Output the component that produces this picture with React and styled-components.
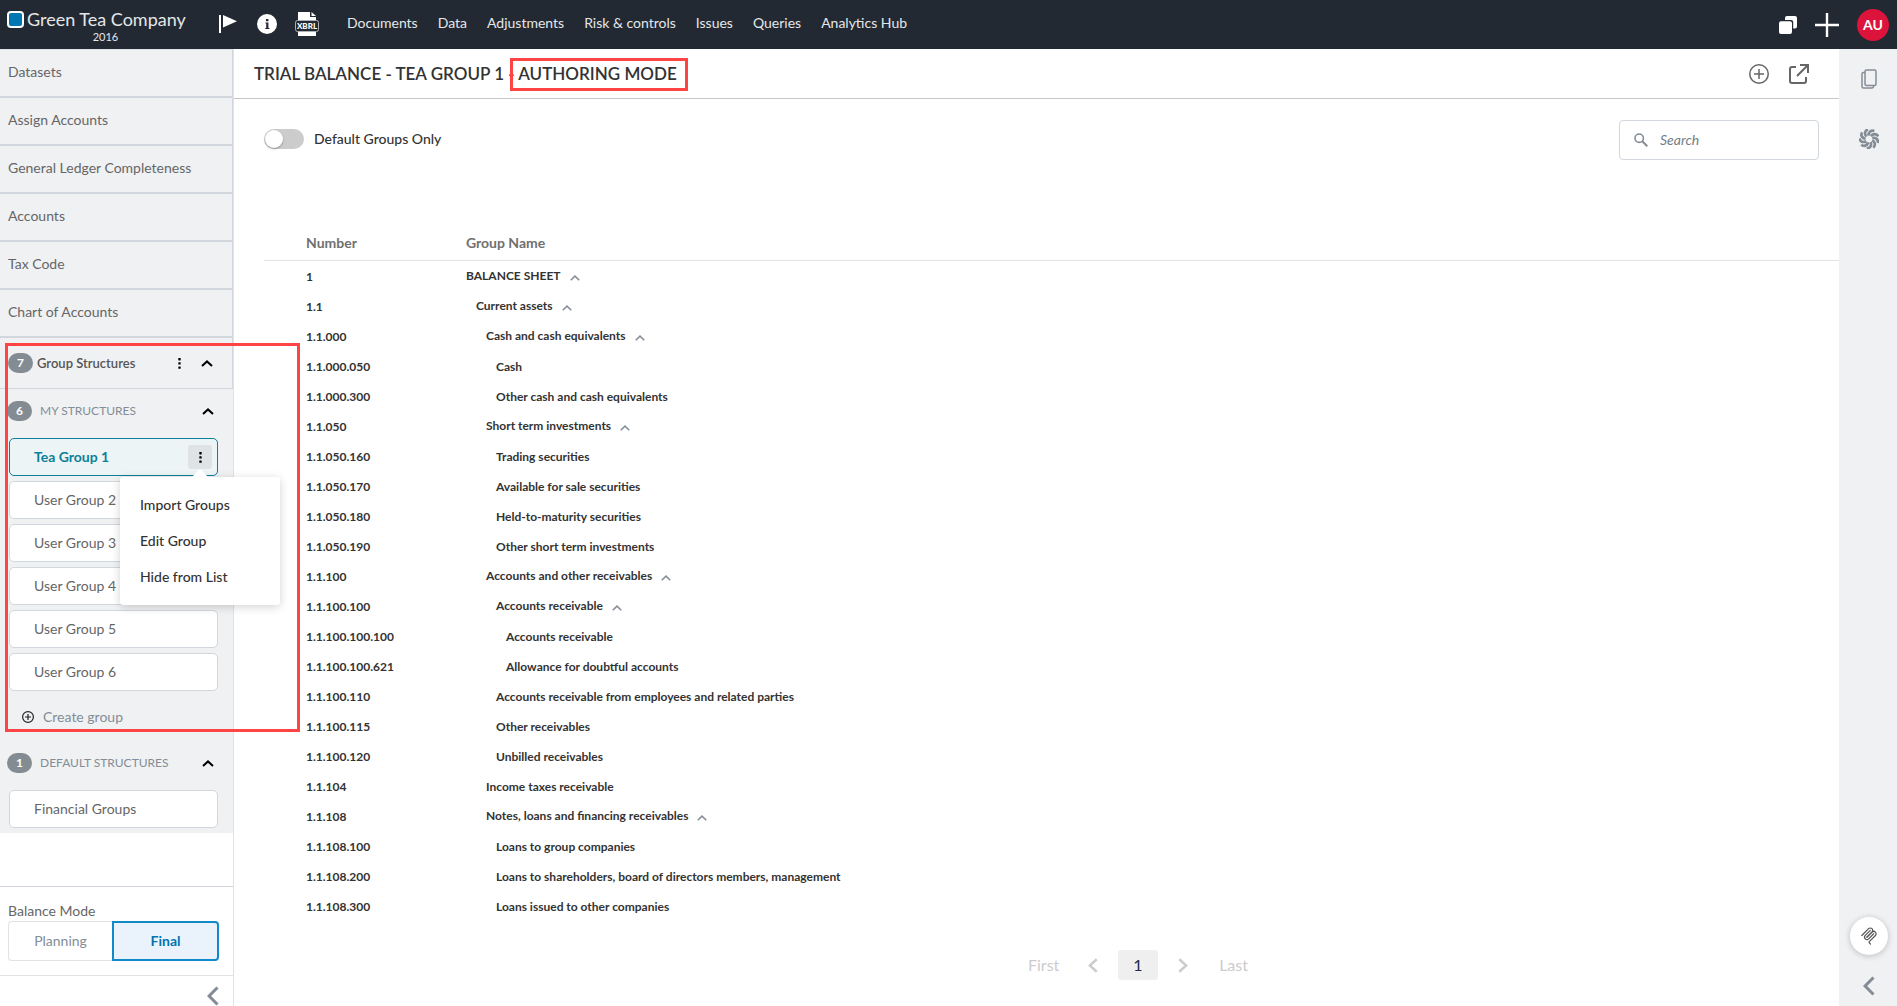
import React from "react";
import styled, { createGlobalStyle, css } from "styled-components";

const GlobalStyle = createGlobalStyle`
  *, *::before, *::after { box-sizing: border-box; }
  body {
    margin: 0;
    background: #fff;
    color: #333;
    font-family: Lato, "Noto Sans", sans-serif;
    font-size: 14px;
    line-height: 20px;
  }
  button, input { font: inherit; color: inherit; }
  button { border: 0; padding: 0; background: none; cursor: pointer; }
  a { color: inherit; text-decoration: none; }
  svg { display: block; flex: none; }
`;

const Shell = styled.div`
  display: flex;
  flex-direction: column;
  height: 100vh;
  overflow: hidden;
`;

const TopBar = styled.header`
  display: flex;
  flex: none;
  align-items: flex-start;
  height: 49px;
  background: #232932;
  color: #e4e7ea;
`;

const Brand = styled.div`
  width: 219px;
  padding: 8px 0 0 7px;
`;

const BrandName = styled.div`
  display: flex;
  align-items: center;
  gap: 3px;
  font-size: 18px;
  line-height: 22px;
`;

const BrandMark = styled.span`
  width: 17px;
  height: 17px;
  border: 2px solid #fff;
  border-radius: 4px;
  background: #0077b3;
`;

const BrandYear = styled.div`
  width: 197px;
  font-size: 11px;
  line-height: 14px;
  text-align: center;
`;

const BrandTools = styled.div`
  display: flex;
  align-items: center;
  gap: 18px;
  height: 48px;
  margin-right: 28px;
`;

const IconButton = styled.button`
  display: flex;
  align-items: center;
  justify-content: center;
  color: ${(p) => p.$color || "#fff"};
`;

const MainMenu = styled.nav`
  display: flex;
  gap: 20px;
  padding-top: 13px;
`;

const UserTools = styled.div`
  display: flex;
  align-items: center;
  gap: 18px;
  height: 49px;
  margin-left: auto;
  padding-right: 8px;
`;

const Avatar = styled.button`
  width: 32px;
  height: 32px;
  border-radius: 50%;
  background: #dc143c;
  color: #fff;
  font-weight: 700;
`;

const Body = styled.div`
  display: flex;
  flex: 1;
  min-height: 0;
`;

const Sidebar = styled.aside`
  display: flex;
  flex: none;
  flex-direction: column;
  width: 234px;
  border-right: 1px solid #e0e2e6;
`;

const SideNav = styled.nav`
  padding-bottom: 5px;
  border-top: 1px solid #dfe2e6;
  background: #f0f1f3;
`;

const SideLink = styled.a`
  display: block;
  height: 48px;
  padding: 12px 8px;
  border-right: 1px solid #d2d7de;
  border-bottom: 2px solid #d2d7de;
  color: #666;
`;

const StructureArea = styled.section`
  position: relative;
`;

const StructureHeader = styled.div`
  display: flex;
  align-items: center;
  height: 51px;
  padding: 0 19px 0 8px;
  border-right: 1px solid #d2d7de;
  border-bottom: 1px solid #d2d7de;
  color: #555;
  font-size: 13px;
`;

const SubHeader = styled.div`
  display: flex;
  align-items: center;
  height: ${(p) => (p.$first ? 44 : 46)}px;
  margin-bottom: ${(p) => (p.$first ? 5 : 4)}px;
  padding: 0 19px 0 7px;
  color: #848d96;
  font-size: 12px;
`;

const Badge = styled.span`
  width: 25px;
  height: 20px;
  border-radius: 10px;
  background: #848c93;
  color: #fff;
  font-size: 12px;
  font-weight: 700;
  text-align: center;
`;

const HeaderLabel = styled.span`
  flex: 1;
  margin-left: ${(p) => p.$gap}px;
  font-weight: ${(p) => (p.$strong ? 600 : 400)};
`;

const MoreButton = styled(IconButton)`
  width: 24px;
  height: 24px;
  border-radius: 3px;
  background: ${(p) => (p.$open ? "#dfe3e5" : "transparent")};
`;

const HeaderActions = styled.div`
  display: flex;
  align-items: center;
  gap: 10px;
`;

const CardList = styled.ul`
  display: flex;
  flex-direction: column;
  gap: 5px;
  margin: 0;
  padding: 0 15px 0 9px;
  list-style: none;
`;

const CardItem = styled.li`
  position: relative;
`;

const Card = styled.div`
  display: flex;
  align-items: center;
  height: 38px;
  padding: 0 5px 0 24px;
  border: 1px solid #d2d7de;
  border-radius: 5px;
  background: #fff;
  color: #666;
  ${(p) =>
    p.$active &&
    css`
      border-color: #0d8099;
      background: #edf4f6;
      color: #0d8099;
      font-weight: 700;
    `}
`;

const CardLink = styled.a`
  flex: 1;
`;

const Popover = styled.div`
  position: absolute;
  z-index: 2;
  top: 39px;
  left: 111px;
  width: 160px;
  padding: 10px 0;
  border-radius: 3px;
  background: #fff;
  box-shadow: 0 2px 10px rgba(0, 0, 0, 0.18);

  &::before {
    content: "";
    position: absolute;
    top: -8px;
    left: 72px;
    border: solid transparent;
    border-width: 0 8px 8px;
    border-bottom-color: #fff;
  }
`;

const PopoverItem = styled.button`
  display: block;
  width: 100%;
  height: 36px;
  padding: 0 20px;
  color: #333;
  font-weight: 500;
  text-align: left;
`;

const CreateButton = styled.button`
  display: flex;
  align-items: center;
  gap: 9px;
  height: 20px;
  margin: 16px 0 13px 22px;
  color: #848d96;
`;

const Highlight = styled.span`
  position: absolute;
  z-index: 3;
  inset: ${(p) => p.$inset};
  border: 3px solid #ff4444;
  pointer-events: none;
`;

const BalanceMode = styled.fieldset`
  margin: auto 0 0;
  padding: 14px 14px 14px 8px;
  border: 0;
  border-top: 1px solid #d2d7de;
  color: #666;
`;

const BalanceLegend = styled.div`
  height: 20px;
`;

const ModeButtons = styled.div`
  display: flex;
  height: 40px;
`;

const ModeButton = styled.button`
  flex: 1;
  border: 1px solid #e0e2e6;
  border-right: 0;
  border-radius: 4px 0 0 4px;
  color: #848d96;
  ${(p) =>
    p.$active &&
    css`
      border: 2px solid #118acb;
      border-radius: 0 4px 4px 0;
      background: #eaf3fb;
      color: #0073b0;
      font-weight: 700;
    `}
`;

const SidebarFooter = styled.div`
  display: flex;
  flex: none;
  justify-content: flex-end;
  height: 31px;
  padding: 10px 14px 0 0;
  border-top: 1px solid #e0e2e6;
`;

const Main = styled.main`
  flex: 1;
  min-width: 0;
`;

const TitleBar = styled.div`
  display: flex;
  align-items: center;
  justify-content: space-between;
  height: 50px;
  padding: 0 30px 0 20px;
  border-bottom: 1px solid #c8c8c8;
`;

const Title = styled.h1`
  margin: 0;
  font-size: 17px;
  line-height: 22px;
  font-weight: 600;
`;

const TitleMode = styled.span`
  position: relative;
`;

const TitleTools = styled.div`
  display: flex;
  gap: 20px;
`;

const Filters = styled.div`
  display: flex;
  align-items: flex-start;
  justify-content: space-between;
  padding: 21px 20px 0 30px;
`;

const ToggleLabel = styled.label`
  display: flex;
  align-items: center;
  gap: 10px;
  height: 38px;
  font-weight: 500;
`;

const Toggle = styled.input`
  appearance: none;
  width: 40px;
  height: 20px;
  margin: 0;
  padding: 1px;
  border-radius: 10px;
  background: #ccc;

  &::before {
    content: "";
    display: block;
    width: 18px;
    height: 18px;
    border-radius: 50%;
    background: #fff;
    box-shadow: 0 1px 2px rgba(0, 0, 0, 0.3);
  }
`;

const SearchBox = styled.label`
  display: flex;
  align-items: center;
  gap: 12px;
  width: 200px;
  height: 40px;
  padding: 0 14px;
  border: 1px solid #d2d7de;
  border-radius: 4px;
  color: #848d96;
`;

const SearchInput = styled.input`
  min-width: 0;
  flex: 1;
  padding: 0;
  border: 0;
  outline: 0;
  background: none;

  &::placeholder {
    color: #737d87;
    font-style: italic;
    opacity: 1;
  }
`;

const TableWrap = styled.div`
  padding: 68px 0 0 30px;
`;

const GroupTable = styled.table`
  width: 100%;
  border-spacing: 0;
  table-layout: fixed;
  font-size: 12px;
  font-weight: 700;
`;

const HeadCell = styled.th`
  width: ${(p) => p.$width};
  height: 33px;
  padding: 0 0 2px ${(p) => p.$indent}px;
  border-bottom: 1px solid #e0e2e6;
  color: #707070;
  font-size: 14px;
  font-weight: 700;
  text-align: left;
`;

const Cell = styled.td`
  height: 30px;
  padding: 2px 0 0 ${(p) => p.$indent}px;
`;

const GroupName = styled.div`
  display: flex;
  align-items: center;
  gap: 9px;
  padding-bottom: ${(p) => (p.$open ? 2 : 0)}px;
`;

const RowToggle = styled(IconButton)`
  padding-top: 4px;
`;

const Pagination = styled.nav`
  display: flex;
  align-items: center;
  justify-content: center;
  gap: 20px;
  padding: 29px 0 0 203px;
  color: #ccc;
  font-size: 16px;
`;

const PageEdge = styled.button`
  width: 40px;
  text-align: ${(p) => p.$align};
`;

const PageNumber = styled.button`
  width: 40px;
  height: 30px;
  border-radius: 3px;
  background: #efefef;
  color: #232b4a;
`;

const Rail = styled.aside`
  display: flex;
  flex: none;
  flex-direction: column;
  align-items: center;
  width: 58px;
  padding: 20px 0 10px 1px;
  background: #f0f1f3;
`;

const RailTop = styled.div`
  display: flex;
  flex: 1;
  flex-direction: column;
  align-items: center;
  gap: 40px;
`;

const FloatingButton = styled(IconButton)`
  width: 38px;
  height: 38px;
  margin-bottom: 21px;
  border-radius: 50%;
  background: #fff;
  box-shadow: 0 1px 6px rgba(0, 0, 0, 0.22);
`;

const Chevron = ({ width = 12, height = 7, stroke = 2, dir = "up", color = "currentColor" }) => {
  const s = stroke / 2;
  const paths = {
    up: `M${s} ${height - s}L${width / 2} ${s + 0.4}L${width - s} ${height - s}`,
    left: `M${width - s} ${s}L${s + 0.6} ${height / 2}L${width - s} ${height - s}`,
    right: `M${s} ${s}L${width - s - 0.6} ${height / 2}L${s} ${height - s}`,
  };
  return (
    <svg width={width} height={height} viewBox={`0 0 ${width} ${height}`} fill="none" stroke={color} strokeWidth={stroke}>
      <path d={paths[dir]} />
    </svg>
  );
};

const FlagIcon = () => (
  <svg width="20" height="20" viewBox="0 0 20 20" fill="#fff">
    <path d="M0 1h2v18H0zM4 1l14 6.2L4 13.5z" />
  </svg>
);

const InfoIcon = () => (
  <svg width="20" height="20" viewBox="0 0 20 20">
    <circle cx="10" cy="10" r="10" fill="#fff" />
    <path d="M9 5h2.4v2.2H9zM8.4 8.6h3V14h1v1H8.2v-1h1V9.6h-.8z" fill="#232932" />
  </svg>
);

const XbrlIcon = () => (
  <svg width="24" height="24" viewBox="0 0 24 24">
    <path d="M3 0h12v5h6v5H3zM16.5 0 21 4h-4.5z" fill="#fff" />
    <path d="M3 18h18v6H3z" fill="#fff" />
    <rect x="0.5" y="8.500" width="23" height="11" rx="2" fill="#232932" stroke="#aeb2b6" />
    <text x="12" y="17" textAnchor="middle" fontSize="8" fontWeight="900" fontFamily="Lato, sans-serif" fill="#fff">
      XBRL
    </text>
  </svg>
);

const WindowsIcon = () => (
  <svg width="18" height="18" viewBox="0 0 18 18" fill="#fff">
    <path d="M6 4V2a2 2 0 0 1 2-2h8a2 2 0 0 1 2 2v8.500a2 2 0 0 1-2 2h-1.800V6a2 2 0 0 0-2-2z" />
    <rect x="0" y="5.200" width="13" height="12.800" rx="2" />
  </svg>
);

const PlusIcon = () => (
  <svg width="24" height="24" viewBox="0 0 24 24" fill="#fff">
    <path d="M10.800 0h2.400v10.800H24v2.400H13.200V24h-2.400V13.200H0v-2.400h10.800z" />
  </svg>
);

const DotsIcon = () => (
  <svg width="3" height="11" viewBox="0 0 3 11" fill="#000">
    <rect width="2.400" height="2.400" x=".3" rx=".6" />
    <rect width="2.400" height="2.400" x=".3" y="4.200" rx=".6" />
    <rect width="2.400" height="2.400" x=".3" y="8.400" rx=".6" />
  </svg>
);

const CirclePlusIcon = ({ size, stroke, color }) => (
  <svg width={size} height={size} viewBox="0 0 20 20" fill="none" stroke={color} strokeWidth={stroke}>
    <circle cx="10" cy="10" r={10 - stroke / 2} />
    <path d="M10 5v10M5 10h10" />
  </svg>
);

const OpenIcon = () => (
  <svg width="20" height="20" viewBox="0 0 20 20" fill="none" stroke="#666" strokeWidth="2">
    <path d="M7 3H3a2 2 0 0 0-2 2v12a2 2 0 0 0 2 2h12a2 2 0 0 0 2-2v-4M11 1h8v8M19 1 8 12" />
  </svg>
);

const SearchIcon = () => (
  <svg width="14" height="14" viewBox="0 0 14 14" fill="none" stroke="currentColor" strokeWidth="1.600">
    <circle cx="5.200" cy="5.200" r="4.200" />
    <path d="M8.300 8.300 13.300 13.300" strokeWidth="2" />
  </svg>
);

const PagesIcon = () => (
  <svg width="16" height="20" viewBox="0 0 16 20" fill="none" stroke="#848d96" strokeWidth="1.500">
    <rect x="4" y="1" width="11" height="15.500" rx="1.500" />
    <path d="M4 3.500H2.500A1.500 1.500 0 0 0 1 5v12.500A1.500 1.500 0 0 0 2.500 19h8.500a1.500 1.500 0 0 0 1.500-1.500v-1" />
  </svg>
);

const SwirlIcon = () => (
  <svg width="20" height="20" viewBox="-10 -10 20 20" fill="none" stroke="#848d96" strokeWidth="2.700">
    {[0, 40, 80, 120, 160, 200, 240, 280, 320].map((angle) => (
      <path key={angle} transform={`rotate(${angle})`} d="M-.6-3.400C-.4-7 2-9.200 5.400-8" />
    ))}
  </svg>
);

const ClipIcon = () => (
  <svg width="18" height="18" viewBox="0 0 180 180" fill="none" stroke="#555" strokeWidth="12" strokeLinecap="round">
    <path d="M18 84.853 85.882 16.971c9.373-9.373 24.569-9.373 33.941 0 9.373 9.372 9.373 24.568 0 33.941L68.558 102.177" />
    <path d="M69.265 101.470 119.823 50.912c9.373-9.373 24.569-9.373 33.942 0l.353.353c9.373 9.373 9.373 24.569 0 33.941L92.725 146.600c-3.124 3.124-3.124 8.189 0 11.313l12.606 12.607" />
    <path d="M102.853 33.941 52.648 84.146c-9.372 9.372-9.372 24.568 0 33.941 9.373 9.372 24.569 9.372 33.941 0l50.205-50.205" />
  </svg>
);

const MENU = ["Documents", "Data", "Adjustments", "Risk & controls", "Issues", "Queries", "Analytics Hub"];
const SIDE_LINKS = ["Datasets", "Assign Accounts", "General Ledger Completeness", "Accounts", "Tax Code", "Chart of Accounts"];
const USER_GROUPS = ["User Group 2", "User Group 3", "User Group 4", "User Group 5", "User Group 6"];
const ACTIONS = ["Import Groups", "Edit Group", "Hide from List"];

const ROWS = [
  ["1", "BALANCE SHEET", 0, true],
  ["1.1", "Current assets", 1, true],
  ["1.1.000", "Cash and cash equivalents", 2, true],
  ["1.1.000.050", "Cash", 3],
  ["1.1.000.300", "Other cash and cash equivalents", 3],
  ["1.1.050", "Short term investments", 2, true],
  ["1.1.050.160", "Trading securities", 3],
  ["1.1.050.170", "Available for sale securities", 3],
  ["1.1.050.180", "Held-to-maturity securities", 3],
  ["1.1.050.190", "Other short term investments", 3],
  ["1.1.100", "Accounts and other receivables", 2, true],
  ["1.1.100.100", "Accounts receivable", 3, true],
  ["1.1.100.100.100", "Accounts receivable", 4],
  ["1.1.100.100.621", "Allowance for doubtful accounts", 4],
  ["1.1.100.110", "Accounts receivable from employees and related parties", 3],
  ["1.1.100.115", "Other receivables", 3],
  ["1.1.100.120", "Unbilled receivables", 3],
  ["1.1.104", "Income taxes receivable", 2],
  ["1.1.108", "Notes, loans and financing receivables", 2, true],
  ["1.1.108.100", "Loans to group companies", 3],
  ["1.1.108.200", "Loans to shareholders, board of directors members, management", 3],
  ["1.1.108.300", "Loans issued to other companies", 3],
];

export default function App() {
  return (
    <Shell>
      <GlobalStyle />
      <TopBar>
        <Brand>
          <BrandName>
            <BrandMark />
            Green Tea Company
          </BrandName>
          <BrandYear>2016</BrandYear>
        </Brand>
        <BrandTools>
          <IconButton aria-label="Flag"><FlagIcon /></IconButton>
          <IconButton aria-label="Information"><InfoIcon /></IconButton>
          <IconButton aria-label="Export"><XbrlIcon /></IconButton>
        </BrandTools>
        <MainMenu>
          {MENU.map((item) => (
            <a key={item} href="#">{item}</a>
          ))}
        </MainMenu>
        <UserTools>
          <IconButton aria-label="Windows"><WindowsIcon /></IconButton>
          <IconButton aria-label="Add"><PlusIcon /></IconButton>
          <Avatar>AU</Avatar>
        </UserTools>
      </TopBar>

      <Body>
        <Sidebar>
          <SideNav>
            {SIDE_LINKS.map((item) => (
              <SideLink key={item} href="#">{item}</SideLink>
            ))}
            <StructureArea>
              <StructureHeader>
                <Badge>7</Badge>
                <HeaderLabel $gap={4} $strong>Group Structures</HeaderLabel>
                <HeaderActions>
                  <MoreButton aria-label="Group structure options"><DotsIcon /></MoreButton>
                  <IconButton aria-label="Collapse group structures" $color="#000"><Chevron /></IconButton>
                </HeaderActions>
              </StructureHeader>
              <SubHeader $first>
                <Badge>6</Badge>
                <HeaderLabel $gap={8}>MY STRUCTURES</HeaderLabel>
                <IconButton aria-label="Collapse my structures" $color="#000"><Chevron /></IconButton>
              </SubHeader>
              <CardList>
                <CardItem>
                  <Card $active>
                    <CardLink href="#">Tea Group 1</CardLink>
                    <MoreButton $open aria-label="Tea Group 1 options"><DotsIcon /></MoreButton>
                  </Card>
                  <Popover>
                    {ACTIONS.map((item) => (
                      <PopoverItem key={item}>{item}</PopoverItem>
                    ))}
                  </Popover>
                </CardItem>
                {USER_GROUPS.map((item) => (
                  <CardItem key={item}>
                    <Card><CardLink href="#">{item}</CardLink></Card>
                  </CardItem>
                ))}
              </CardList>
              <CreateButton>
                <CirclePlusIcon size={12} stroke={2} color="#222" />
                Create group
              </CreateButton>
              <Highlight $inset="5px -67px -5px 5px" />
            </StructureArea>
            <SubHeader>
              <Badge>1</Badge>
              <HeaderLabel $gap={8}>DEFAULT STRUCTURES</HeaderLabel>
              <IconButton aria-label="Collapse default structures" $color="#000"><Chevron /></IconButton>
            </SubHeader>
            <CardList>
              <CardItem>
                <Card><CardLink href="#">Financial Groups</CardLink></Card>
              </CardItem>
            </CardList>
          </SideNav>
          <BalanceMode aria-labelledby="balance-mode">
            <BalanceLegend id="balance-mode">Balance Mode</BalanceLegend>
            <ModeButtons>
              <ModeButton>Planning</ModeButton>
              <ModeButton $active>Final</ModeButton>
            </ModeButtons>
          </BalanceMode>
          <SidebarFooter>
            <IconButton aria-label="Collapse sidebar" $color="#848d96">
              <Chevron width={12} height={20} stroke={3} dir="left" />
            </IconButton>
          </SidebarFooter>
        </Sidebar>

        <Main>
          <TitleBar>
            <Title>
              TRIAL BALANCE - TEA GROUP 1 -{" "}
              <TitleMode>
                AUTHORING MODE
                <Highlight $inset="-5px -11px -7px -8px" />
              </TitleMode>
            </Title>
            <TitleTools>
              <IconButton aria-label="Add group"><CirclePlusIcon size={20} stroke={1.5} color="#666" /></IconButton>
              <IconButton aria-label="Open in new window"><OpenIcon /></IconButton>
            </TitleTools>
          </TitleBar>
          <Filters>
            <ToggleLabel>
              <Toggle type="checkbox" role="switch" />
              Default Groups Only
            </ToggleLabel>
            <SearchBox>
              <SearchIcon />
              <SearchInput type="search" placeholder="Search" aria-label="Search" />
            </SearchBox>
          </Filters>
          <TableWrap>
            <GroupTable>
              <thead>
                <tr>
                  <HeadCell $width="202px" $indent={42}>Number</HeadCell>
                  <HeadCell $width="auto" $indent={0}>Group Name</HeadCell>
                </tr>
              </thead>
              <tbody>
                {ROWS.map(([number, name, level, open]) => (
                  <tr key={number}>
                    <Cell $indent={42}>{number}</Cell>
                    <Cell $indent={level * 10}>
                      <GroupName $open={open}>
                        {name}
                        {open && (
                          <RowToggle aria-label={`Collapse ${name}`} $color="#848d96">
                            <Chevron width={10} height={6} stroke={1.5} />
                          </RowToggle>
                        )}
                      </GroupName>
                    </Cell>
                  </tr>
                ))}
              </tbody>
            </GroupTable>
          </TableWrap>
          <Pagination aria-label="Pages">
            <PageEdge $align="left">First</PageEdge>
            <IconButton aria-label="Previous page" $color="#ccc"><Chevron width={10} height={15} stroke={2.5} dir="left" /></IconButton>
            <PageNumber>1</PageNumber>
            <IconButton aria-label="Next page" $color="#ccc"><Chevron width={10} height={15} stroke={2.5} dir="right" /></IconButton>
            <PageEdge $align="right">Last</PageEdge>
          </Pagination>
        </Main>

        <Rail>
          <RailTop>
            <IconButton aria-label="Documents panel"><PagesIcon /></IconButton>
            <IconButton aria-label="Insights panel"><SwirlIcon /></IconButton>
          </RailTop>
          <FloatingButton aria-label="Assistant"><ClipIcon /></FloatingButton>
          <IconButton aria-label="Expand panel" $color="#848d96">
            <Chevron width={12} height={20} stroke={3} dir="left" />
          </IconButton>
        </Rail>
      </Body>
    </Shell>
  );
}
